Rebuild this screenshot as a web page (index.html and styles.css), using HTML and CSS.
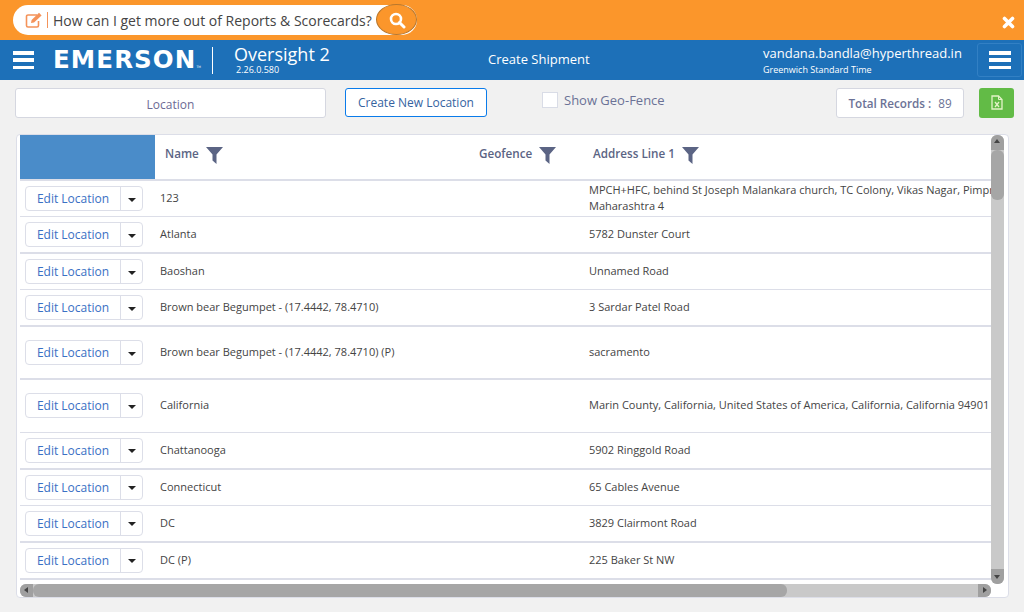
FILE: index.html
```html
<!DOCTYPE html>
<html lang="en">
<head>
    <meta charset="UTF-8">
    <title>Locations</title>
    <link rel="stylesheet" href="styles.css">
</head>
<body>
    <div class="help-bar">
        <div class="help-search">
            <svg class="help-edit" width="18" height="16" viewBox="0 0 18 16"><path d="M12 3H3a1.500 1.500 0 0 0-1.500 1.500v9A1.500 1.500 0 0 0 3 15h9a1.500 1.500 0 0 0 1.500-1.500V9" fill="none" stroke="#f4935a" stroke-width="1.600"/><path d="M6 11l.6-3L14 .8l2.600 2.600L9 10.400z" fill="#f4935a"/></svg>
            <span class="help-sep"></span>
            <span class="help-text">How can I get more out of Reports &amp; Scorecards?</span>
            <span class="help-btn">
                <svg width="18" height="18" viewBox="0 0 18 18"><circle cx="8" cy="8" r="5" fill="none" stroke="#fff" stroke-width="2.600"/><path d="M11.500 11.500l4.500 4.500" stroke="#fff" stroke-width="3" stroke-linecap="round"/></svg>
            </span>
        </div>
        <svg class="help-close" width="13" height="13" viewBox="0 0 13 13"><path d="M2.500 2.500l8 8M10.500 2.500l-8 8" stroke="#fff" stroke-width="3.600" stroke-linecap="round"/></svg>
    </div>

    <header class="app-bar">
        <div class="burger"><i></i><i></i><i></i></div>
        <div class="logo">EMERSON<small>TM</small></div>
        <div class="product">
            <div class="product-name">Oversight 2</div>
            <div class="product-version">2.26.0.580</div>
        </div>
        <div class="page-title">Create Shipment</div>
        <div class="user">
            <div class="user-mail">vandana.bandla@hyperthread.in</div>
            <div class="user-zone">Greenwich Standard Time</div>
        </div>
        <div class="menu-btn"><div class="burger"><i></i><i></i><i></i></div></div>
    </header>

    <div class="toolbar">
        <div class="location-box">Location</div>
        <button class="create-btn">Create New Location</button>
        <label class="geo-check"><span class="check"></span>Show Geo-Fence</label>
        <div class="total-box"><b>Total Records :</b><span>89</span></div>
        <button class="excel-btn">
            <svg width="12" height="15" viewBox="0 0 12 15"><path d="M1 1h6.500L11 4.500V14H1z" fill="none" stroke="#e4f3c8" stroke-width="1.300"/><path d="M7.500 1v3.500H11" fill="none" stroke="#e4f3c8" stroke-width="1"/><path d="M4 7l4 5M8 7l-4 5" stroke="#e4f3c8" stroke-width="1.300"/></svg>
        </button>
    </div>

    <div class="grid-card">
        <div class="grid-main">
            <div class="grid-view">
                <table class="grid">
                    <colgroup><col class="col-action"><col class="col-name"><col class="col-geo"><col class="col-addr"></colgroup>
                    <thead>
                        <tr>
                            <th class="head-blank"></th>
                            <th><span class="head-name">Name</span><svg class="funnel" width="17" height="17" viewBox="0 0 17 17"><path d="M0 0h17L10.500 7.500V17L6.500 13.500V7.500z"/></svg></th>
                            <th><span class="head-name">Geofence</span><svg class="funnel" width="17" height="17" viewBox="0 0 17 17"><path d="M0 0h17L10.500 7.500V17L6.500 13.500V7.500z"/></svg></th>
                            <th><span class="head-name">Address Line 1</span><svg class="funnel" width="17" height="17" viewBox="0 0 17 17"><path d="M0 0h17L10.500 7.500V17L6.500 13.500V7.500z"/></svg></th>
                        </tr>
                    </thead>
                    <tbody>
                        <tr class="h36 thin">
                            <td><div class="edit-group"><span class="edit-btn">Edit Location</span><span class="edit-caret"><i></i></span></div></td>
                            <td>123</td><td></td>
                            <td><div class="addr-wrap">MPCH+HFC, behind St Joseph Malankara church, TC Colony, Vikas Nagar, Pimpri-Chinchwad, Maharashtra 4</div></td>
                        </tr>
                        <tr class="h36">
                            <td><div class="edit-group"><span class="edit-btn">Edit Location</span><span class="edit-caret"><i></i></span></div></td>
                            <td>Atlanta</td><td></td><td>5782 Dunster Court</td>
                        </tr>
                        <tr class="h36 thin">
                            <td><div class="edit-group"><span class="edit-btn">Edit Location</span><span class="edit-caret"><i></i></span></div></td>
                            <td>Baoshan</td><td></td><td>Unnamed Road</td>
                        </tr>
                        <tr class="h36">
                            <td><div class="edit-group"><span class="edit-btn">Edit Location</span><span class="edit-caret"><i></i></span></div></td>
                            <td>Brown bear Begumpet - (17.4442, 78.4710)</td><td></td><td>3 Sardar Patel Road</td>
                        </tr>
                        <tr class="h53">
                            <td><div class="edit-group"><span class="edit-btn">Edit Location</span><span class="edit-caret"><i></i></span></div></td>
                            <td>Brown bear Begumpet - (17.4442, 78.4710) (P)</td><td></td><td>sacramento</td>
                        </tr>
                        <tr class="h53 thin">
                            <td><div class="edit-group"><span class="edit-btn">Edit Location</span><span class="edit-caret"><i></i></span></div></td>
                            <td>California</td><td></td><td>Marin County, California, United States of America, California, California 94901</td>
                        </tr>
                        <tr class="h36">
                            <td><div class="edit-group"><span class="edit-btn">Edit Location</span><span class="edit-caret"><i></i></span></div></td>
                            <td>Chattanooga</td><td></td><td>5902 Ringgold Road</td>
                        </tr>
                        <tr class="h36 thin">
                            <td><div class="edit-group"><span class="edit-btn">Edit Location</span><span class="edit-caret"><i></i></span></div></td>
                            <td>Connecticut</td><td></td><td>65 Cables Avenue</td>
                        </tr>
                        <tr class="h36">
                            <td><div class="edit-group"><span class="edit-btn">Edit Location</span><span class="edit-caret"><i></i></span></div></td>
                            <td>DC</td><td></td><td>3829 Clairmont Road</td>
                        </tr>
                        <tr class="h37">
                            <td><div class="edit-group"><span class="edit-btn">Edit Location</span><span class="edit-caret"><i></i></span></div></td>
                            <td>DC (P)</td><td></td><td>225 Baker St NW</td>
                        </tr>
                    </tbody>
                </table>
            </div>
            <div class="vscroll">
                <span class="arrow arrow-up"></span>
                <div class="vtrack"><div class="vthumb"></div></div>
                <span class="arrow arrow-down"></span>
            </div>
        </div>
        <div class="hscroll">
            <span class="arrow arrow-left"></span>
            <div class="htrack"><div class="hthumb"></div></div>
            <span class="arrow arrow-right"></span>
        </div>
    </div>
</body>
</html>
```

FILE: styles.css
```css
* {
    box-sizing: border-box;
}
body {
    margin: 0;
    height: 612px;
    overflow: hidden;
    background-color: #f1f1f1;
    font-family: "Open Sans", Arial, sans-serif;
    font-size: 11px;
    color: #4a5170;
}

/* orange help bar */
.help-bar {
    height: 40px;
    background-color: #fb962b;
    display: flex;
    align-items: flex-start;
    justify-content: space-between;
    padding: 5px 9px 0 13px;
}
.help-search {
    width: 404px;
    height: 30px;
    background-color: #fff;
    border-radius: 15px;
    display: flex;
    align-items: center;
    padding-left: 12px;
}
.help-edit {
    flex: none;
}
.help-sep {
    width: 1px;
    height: 16px;
    margin: 0 5px 0 4px;
    background-color: #f4935a;
}
.help-text {
    flex: 1;
    font-size: 14px;
    white-space: nowrap;
    color: #444;
}
.help-btn {
    flex: none;
    width: 41px;
    height: 31px;
    margin-top: -1px;
    border: 1px solid #b9772c;
    border-radius: 50%;
    background-color: #fb962b;
    display: flex;
    align-items: center;
    justify-content: center;
}
.help-close {
    margin-top: 11px;
}

/* blue app bar */
.app-bar {
    height: 40px;
    background-color: #1d70b8;
    color: #fff;
    display: flex;
    align-items: center;
    padding-left: 13px;
}
.burger {
    width: 21px;
    height: 18px;
    display: flex;
    flex-direction: column;
    justify-content: space-between;
}
.burger i {
    display: block;
    height: 3.500px;
    background-color: #fff;
}
.logo {
    width: 159px;
    margin-left: 19px;
    height: 40px;
    line-height: 40px;
    font-family: "DejaVu Sans", Arial, sans-serif;
    font-weight: bold;
    font-size: 24.500px;
    letter-spacing: 1.100px;
    white-space: nowrap;
}
.logo small {
    font-size: 3px;
    font-weight: normal;
    letter-spacing: 0;
}
.product {
    width: 276px;
    height: 27px;
    border-left: 1px solid #fff;
    padding-left: 21px;
}
.product-name {
    font-size: 18px;
    line-height: 19px;
    margin-top: -2px;
}
.product-version {
    font-size: 9px;
    line-height: 11px;
    padding-left: 2px;
}
.page-title {
    width: 275px;
    font-size: 13px;
    margin-top: -2px;
}
.user {
    width: 214px;
}
.user-mail {
    font-size: 13px;
    line-height: 19px;
}
.user-zone {
    font-size: 9px;
    line-height: 13px;
}
.menu-btn {
    width: 45px;
    height: 34px;
    border: 1px solid #3280c4;
    border-radius: 3px;
    display: flex;
    align-items: center;
    justify-content: center;
}
.menu-btn .burger {
    width: 22px;
    height: 18px;
}

/* toolbar */
.toolbar {
    height: 54px;
    display: flex;
    align-items: flex-start;
    padding: 8px 0 0 15px;
}
.location-box {
    width: 311px;
    height: 30px;
    background-color: #fff;
    border: 1px solid #d5d7e0;
    border-radius: 3px;
    text-align: center;
    line-height: 31px;
    font-size: 12px;
    color: #6d6a94;
}
.create-btn {
    width: 142px;
    height: 29px;
    margin-left: 19px;
    background-color: #fff;
    border: 1px solid #0a7bea;
    border-radius: 3px;
    font-family: inherit;
    font-size: 12px;
    color: #35639f;
    padding: 0;
}
.geo-check {
    width: 294px;
    margin-left: 55px;
    display: flex;
    align-items: center;
    height: 24px;
    font-size: 13px;
    color: #6b7296;
}
.check {
    width: 16px;
    height: 16px;
    background-color: #fff;
    border: 1px solid #d9dce6;
    margin-right: 6px;
}
.total-box {
    width: 128px;
    height: 30px;
    background-color: #fff;
    border: 1px solid #d5d7e0;
    border-radius: 3px;
    display: flex;
    align-items: center;
    justify-content: center;
    font-size: 11.700px;
    color: #6b7296;
}
.total-box b {
    font-weight: 600;
}
.total-box span {
    margin-left: 7px;
}
.excel-btn {
    width: 35px;
    height: 30px;
    margin-left: 15px;
    background-color: #62bb46;
    border: none;
    border-radius: 3px;
    padding: 2px 0 0;
}

/* location grid */
.grid-card {
    width: 993px;
    height: 464px;
    margin-left: 16px;
    background-color: #fff;
    border: 1px solid #dcdee8;
    border-radius: 4px;
    padding-left: 3px;
    padding-right: 3px;
}
.grid-main {
    display: flex;
    height: 449px;
}
.grid-view {
    width: 971px;
    overflow: hidden;
}
.grid {
    width: 1300px;
    table-layout: fixed;
    border-collapse: collapse;
}
.col-action {
    width: 135px;
}
.col-name {
    width: 315px;
}
.col-geo {
    width: 114px;
}
.grid thead tr {
    height: 45px;
    border-bottom: 2px solid #dcdee8;
}
.grid th {
    text-align: left;
    padding: 0 0 5px 9px;
    white-space: nowrap;
    vertical-align: middle;
}
.grid th:nth-child(2) {
    padding-left: 10px;
}
.grid th.head-blank {
    background-color: #4a8cc9;
}
.head-name {
    font-size: 11.700px;
    font-weight: 600;
    color: #5b6484;
}
.funnel {
    margin-left: 7px;
    vertical-align: -6px;
    fill: #5b6484;
}
.grid td {
    padding: 0 0 2px 5px;
    font-size: 11px;
    color: #444;
    white-space: nowrap;
    vertical-align: middle;
    overflow: hidden;
}
.grid td:first-child {
    padding-bottom: 0;
}
.grid tbody tr {
    border-bottom: 2px solid #dcdee8;
}
.grid tbody tr.thin {
    border-bottom-width: 1px;
}
.h36 {
    height: 36.500px;
}
.h37 {
    height: 37.500px;
}
.h53 {
    height: 53px;
}
.addr-wrap {
    width: 520px;
    white-space: normal;
    line-height: 16px;
}
.edit-group {
    width: 118px;
    height: 25px;
    display: flex;
    background-color: #fff;
    border: 1px solid #dcdee8;
    border-radius: 4px;
}
.edit-btn {
    width: 95px;
    text-align: center;
    line-height: 23px;
    font-size: 12px;
    color: #3a70c4;
    border-right: 1px solid #dcdee8;
}
.edit-caret {
    flex: 1;
    display: flex;
    align-items: center;
    justify-content: center;
}
.edit-caret i {
    border-top: 4px solid #222;
    border-left: 4px solid transparent;
    border-right: 4px solid transparent;
    margin-top: 2px;
}

/* scrollbars */
.vscroll {
    width: 13px;
    display: flex;
    flex-direction: column;
    background-color: #c9c9c9;
    border-radius: 6px;
}
.vtrack,
.htrack {
    flex: 1;
}
.vthumb {
    height: 50px;
    background-color: #a6a6a6;
    border-radius: 6px;
}
.hscroll {
    height: 13px;
    width: 971px;
    display: flex;
    background-color: #c9c9c9;
    border-radius: 6px;
}
.hthumb {
    height: 13px;
    width: 754px;
    background-color: #a6a6a6;
    border-radius: 6px;
}
.arrow {
    flex: none;
    width: 13px;
    height: 13px;
    background-color: #a0a0a0;
    position: relative;
}
.arrow::after {
    content: "";
    position: absolute;
    left: 3px;
    top: 4px;
    border: 3.500px solid transparent;
}
.arrow-up {
    height: 15px;
    border-radius: 6px 6px 0 0;
}
.arrow-up::after {
    top: 1px;
    border-bottom: 4px solid #444;
}
.arrow-down {
    height: 15px;
    border-radius: 0 0 6px 6px;
}
.arrow-down::after {
    top: 6px;
    border-top: 4px solid #444;
}
.arrow-left {
    border-radius: 6px 0 0 6px;
}
.arrow-left::after {
    left: 1px;
    top: 3px;
    border-right: 4px solid #444;
}
.arrow-right {
    border-radius: 0 6px 6px 0;
}
.arrow-right::after {
    left: 5px;
    top: 3px;
    border-left: 4px solid #444;
}
```
